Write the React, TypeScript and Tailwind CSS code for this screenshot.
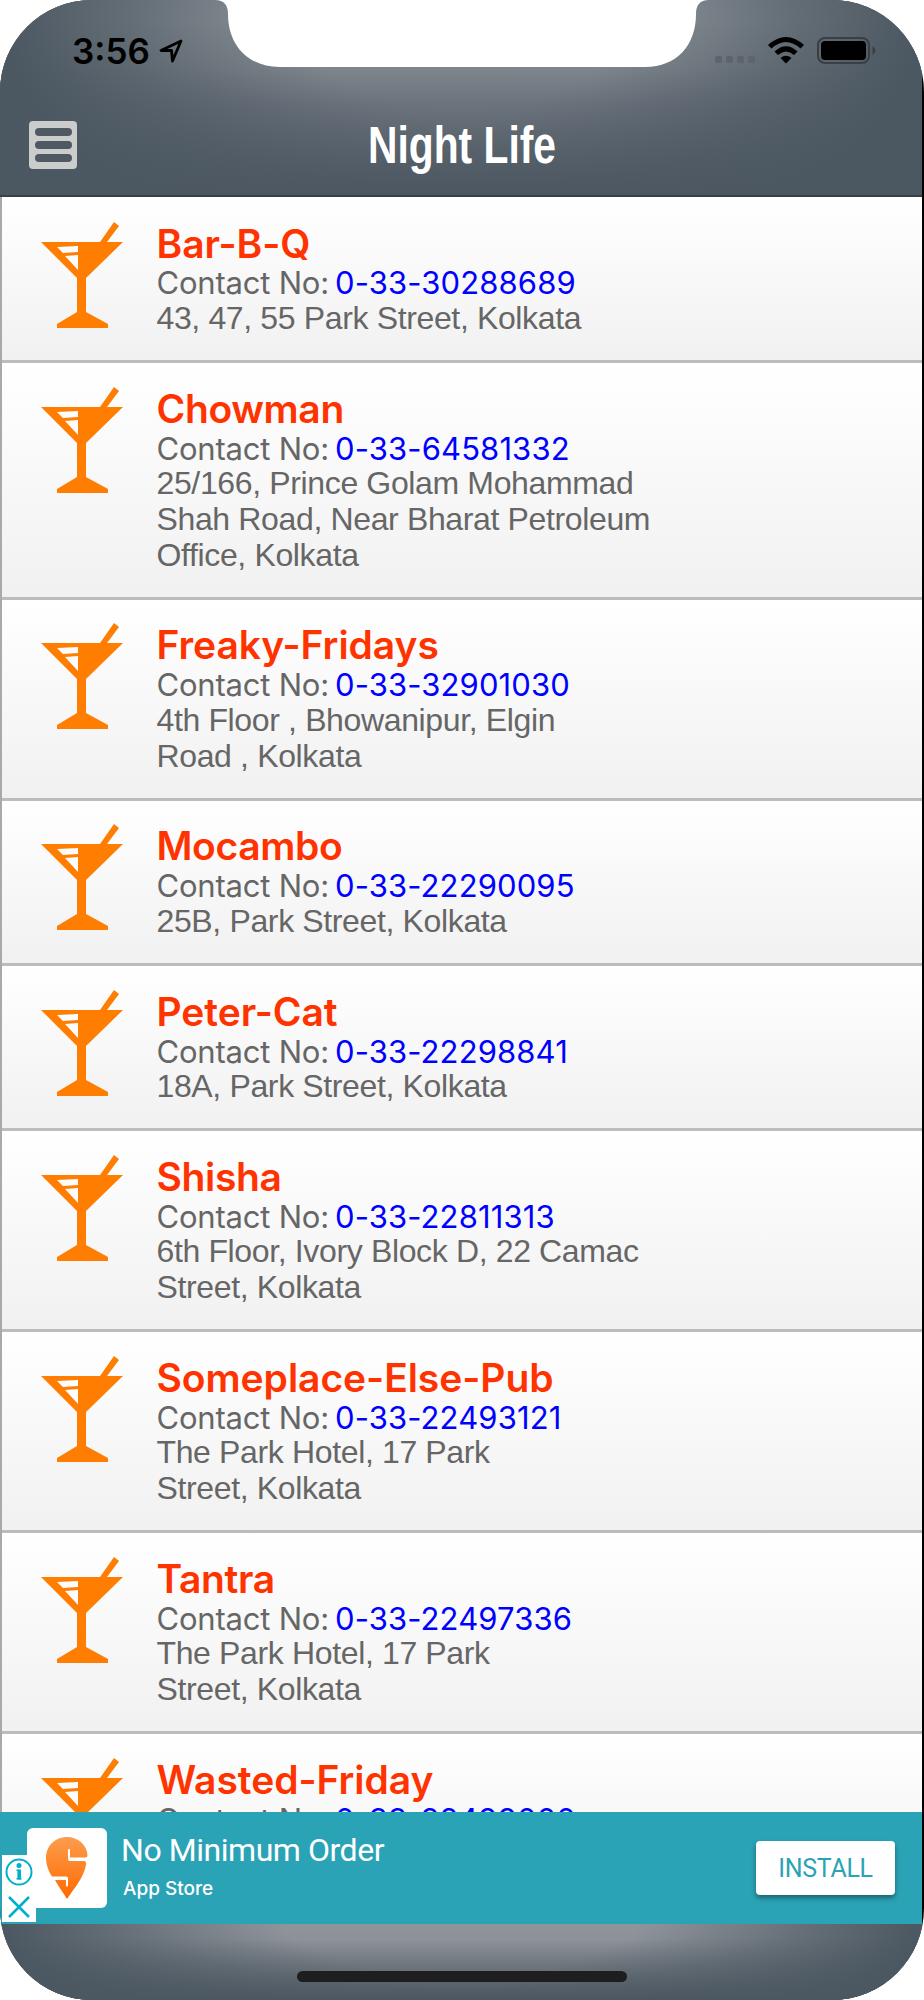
import React from 'react';
import clsx from 'clsx';

type Place = {
  name: string;
  phone: string;
  address: string[];
};

const places: Place[] = [
  { name: 'Bar-B-Q', phone: '0-33-30288689', address: ['43, 47, 55 Park Street, Kolkata'] },
  {
    name: 'Chowman',
    phone: '0-33-64581332',
    address: ['25/166, Prince Golam Mohammad', 'Shah Road, Near Bharat Petroleum', 'Office, Kolkata'],
  },
  { name: 'Freaky-Fridays', phone: '0-33-32901030', address: ['4th Floor , Bhowanipur, Elgin', 'Road , Kolkata'] },
  { name: 'Mocambo', phone: '0-33-22290095', address: ['25B, Park Street, Kolkata'] },
  { name: 'Peter-Cat', phone: '0-33-22298841', address: ['18A, Park Street, Kolkata'] },
  { name: 'Shisha', phone: '0-33-22811313', address: ['6th Floor, Ivory Block D, 22 Camac', 'Street, Kolkata'] },
  { name: 'Someplace-Else-Pub', phone: '0-33-22493121', address: ['The Park Hotel, 17 Park', 'Street, Kolkata'] },
  { name: 'Tantra', phone: '0-33-22497336', address: ['The Park Hotel, 17 Park', 'Street, Kolkata'] },
  { name: 'Wasted-Friday', phone: '0-33-22499000', address: [] },
];

function Cocktail() {
  return (
    <svg width="82" height="107" viewBox="0 0 82 107" className="shrink-0" fill="#ff7d00">
      <path d="M0 20 H59 L73 0 L78 4 L66 20 H82 L45 56 V90 L67 102 V106 H16 V102 L36 90 V56 Z" />
      <path d="M16 25 L37 24 V30 L22 31 Z M24 34 L37 33 V48 Z" fill="#fcfcfc" />
    </svg>
  );
}

function StatusBar() {
  return (
    <div className="flex h-[100px] items-center justify-between pr-[46px] pl-[72px]">
      <div className="flex items-center gap-[9px] pt-px text-black">
        <span className="text-[35px] leading-[40px] font-semibold">3:56</span>
        <svg width="24" height="24" viewBox="0 0 24 24" fill="none" stroke="black" strokeWidth="2.8" strokeLinejoin="round">
          <path d="M22 2 L2 11.5 L12.5 11.5 L13.5 22 Z" />
        </svg>
      </div>
      <div className="flex items-center">
        <div className="mt-[19px] mr-[13px] flex gap-[4px]">
          <span className="h-[7px] w-[7px] rounded-[2px] bg-[#5d646b]" />
          <span className="h-[7px] w-[7px] rounded-[2px] bg-[#5d646b]" />
          <span className="h-[7px] w-[7px] rounded-[2px] bg-[#5d646b]" />
          <span className="h-[7px] w-[7px] rounded-[2px] bg-[#5d646b]" />
        </div>
        <svg width="36" height="27" viewBox="0 0 36 27" className="mr-[13px]">
          <path d="M0 8 Q18 -8 36 8 L32.5 11.5 Q18 -1.5 3.5 11.5 Z" />
          <path d="M6.5 14.5 Q18 4 29.5 14.5 L26 18 Q18 11 10 18 Z" />
          <path d="M12.5 21 Q18 16.5 23.5 21 L18 26.5 Z" />
        </svg>
        <svg width="59" height="27" viewBox="0 0 59 27">
          <rect x="1" y="1" width="51" height="25" rx="7" fill="none" stroke="#393f45" strokeWidth="2" />
          <rect x="4" y="4" width="45" height="19" rx="4" />
          <path d="M55.5 9 Q58.5 11 58.5 13.5 Q58.5 16 55.5 18 Z" fill="#393f45" />
        </svg>
      </div>
    </div>
  );
}

function Header() {
  return (
    <header className="relative h-[197px] shrink-0 border-b-2 border-[#38414b] bg-[radial-gradient(ellipse_50%_150%_at_50%_0%,rgba(75,87,97,0)_38%,rgba(75,87,97,0.6)_72%,#4b5761_100%),linear-gradient(to_bottom,#878e95_0%,#8a9197_10%,#7f868c_34%,#6c737d_53%,#58626b_82%,#505762_100%)]">
      <svg width="500" height="68" viewBox="212 0 500 68" className="absolute top-0 left-[212px]" fill="white">
        <path d="M215 0 C224 0 228 5 228 14 C228 45 248 67 280 67 H645 C677 67 696 45 696 14 C696 5 700 0 709 0 Z" />
      </svg>
      <StatusBar />
      <div className="flex h-[90px] items-center">
        <button className="ml-[29px] flex h-[48px] w-[48px] flex-col items-center justify-center gap-[5px] rounded-[4px] bg-[#cbcccc]">
          <span className="h-[8px] w-[37px] rounded-full bg-[#4f5963]" />
          <span className="h-[8px] w-[37px] rounded-full bg-[#4f5963]" />
          <span className="h-[8px] w-[37px] rounded-full bg-[#4f5963]" />
        </button>
        <h1 className="mr-[75px] flex-1 scale-x-[0.8] pt-[2px] text-center font-['Liberation_Sans',Arial,sans-serif] text-[51px] leading-[60px] font-bold whitespace-nowrap text-white">
          Night Life
        </h1>
      </div>
    </header>
  );
}

function PlaceRow({ place }: { place: Place }) {
  return (
    <li className="flex border-b-[3px] border-[#bcbcbc] bg-linear-to-b from-white to-[#f1f1f1] pt-[23.5px] pb-[25.5px] pl-[38.5px]">
      <Cocktail />
      <div className="ml-[34px] flex flex-col whitespace-nowrap">
        <h2
          className={clsx(
            'h-[42.9px] text-[39px] leading-[43px] font-semibold text-[#ff3300]',
            place.name.includes('-') ? 'tracking-[-0.05px]' : 'tracking-[-0.35px]'
          )}
        >
          {place.name}
        </h2>
        <p className="h-[34.5px] text-[31px] leading-[37px] tracking-[-0.2px] text-[#666]">
          Contact No: <a className="-ml-[2.5px] tracking-[0.12px] text-[#0000ff]">{place.phone}</a>
        </p>
        {place.address.map((line) => (
          <p
            key={line}
            className="h-[35.8px] font-['Liberation_Sans',Arial,sans-serif] text-[32px] leading-[39px] tracking-[-0.36px] text-[#666]"
          >
            {line}
          </p>
        ))}
      </div>
    </li>
  );
}

function AdBanner() {
  return (
    <div className="relative flex h-[112px] shrink-0 items-center bg-[#2ba3b6]">
      <div className="ml-[27px] flex h-[80px] w-[80px] items-center justify-center rounded-[6px] bg-white">
        <svg width="42" height="62" viewBox="0 0 42 62">
          <defs>
            <linearGradient id="pin" x1="0" y1="0" x2="0" y2="1">
              <stop offset="0" stopColor="#fc9d4e" />
              <stop offset="1" stopColor="#ff6a00" />
            </linearGradient>
          </defs>
          <path
            fill="url(#pin)"
            d="M21 62 C17 55 12 49 9 43 H20 V48 C20 50 22 50 22 48 V41 Q22 39.5 20 39.5 H6 C3 35 0 28 0 21 C0 9 9 0 21 0 C32 0 41 8 41.5 18 Q41.5 20.5 39 20.5 H24 V13 C24 11.5 22 11.5 22 13 V22 Q22 24 24 24 H38 Q40.5 24 40 28 C37 42 29 50 21 62 Z"
          />
        </svg>
      </div>
      <div className="mb-px ml-[14px] flex-1 font-[Roboto,sans-serif] text-white">
        <p className="text-[32px] leading-[40px] tracking-[-0.45px]">No Minimum Order</p>
        <p className="mt-[3px] ml-[2px] font-[Inter,sans-serif] text-[19px] leading-[32px] font-medium">App Store</p>
      </div>
      <button className="mr-[27px] h-[54px] w-[139px] rounded-[4px] bg-white pt-[2px] font-[Roboto,sans-serif] text-[25px] tracking-[-0.3px] text-[#2ba3b6] shadow-[0_3px_5px_rgba(0,0,0,0.4)]">
        INSTALL
      </button>
      <div className="absolute bottom-[2px] left-[2px] flex h-[67px] w-[34px] flex-col items-center gap-[10px] bg-white pt-[3px]">
        <svg width="28" height="28" viewBox="0 0 28 28" fill="none" stroke="#00aecd" strokeWidth="2">
          <circle cx="14" cy="14" r="12.5" />
          <circle cx="14" cy="7.5" r="2.5" fill="#00aecd" stroke="none" />
          <path d="M14.2 11.5 V21.5" strokeWidth="3.6" />
          <path d="M11.5 12.2 H14 M11.5 20.8 H16.5" strokeWidth="1.4" />
        </svg>
        <svg width="22" height="22" viewBox="0 0 22 22" fill="none" stroke="#00aecd" strokeWidth="2.5">
          <path d="M1 1 L21 21 M21 1 L1 21" />
        </svg>
      </div>
    </div>
  );
}

export default function App() {
  return (
    <div className="h-[2000px] w-[924px] bg-white font-[Inter,sans-serif]">
      <div className="flex h-full w-[924px] flex-col overflow-hidden rounded-[92px] bg-black pr-[2px]">
        <Header />
        <ul className="flex-1 overflow-hidden border-l-2 border-[#a9a9a9] bg-white pt-px">
          {places.map((place) => (
            <PlaceRow key={place.name} place={place} />
          ))}
        </ul>
        <AdBanner />
        <footer className="flex h-[76px] shrink-0 items-end justify-center bg-[radial-gradient(ellipse_50%_170%_at_50%_0%,rgba(75,87,97,0)_38%,rgba(75,87,97,0.6)_74%,#4b5761_100%),linear-gradient(to_bottom,#90959c_0%,#8c9298_20%,#70787f_52%,#555f68_88%,#4c5660_100%)] pb-[18px] pl-px">
          <div className="h-[11px] w-[330px] rounded-full bg-[#1e1e1e]" />
        </footer>
      </div>
    </div>
  );
}
